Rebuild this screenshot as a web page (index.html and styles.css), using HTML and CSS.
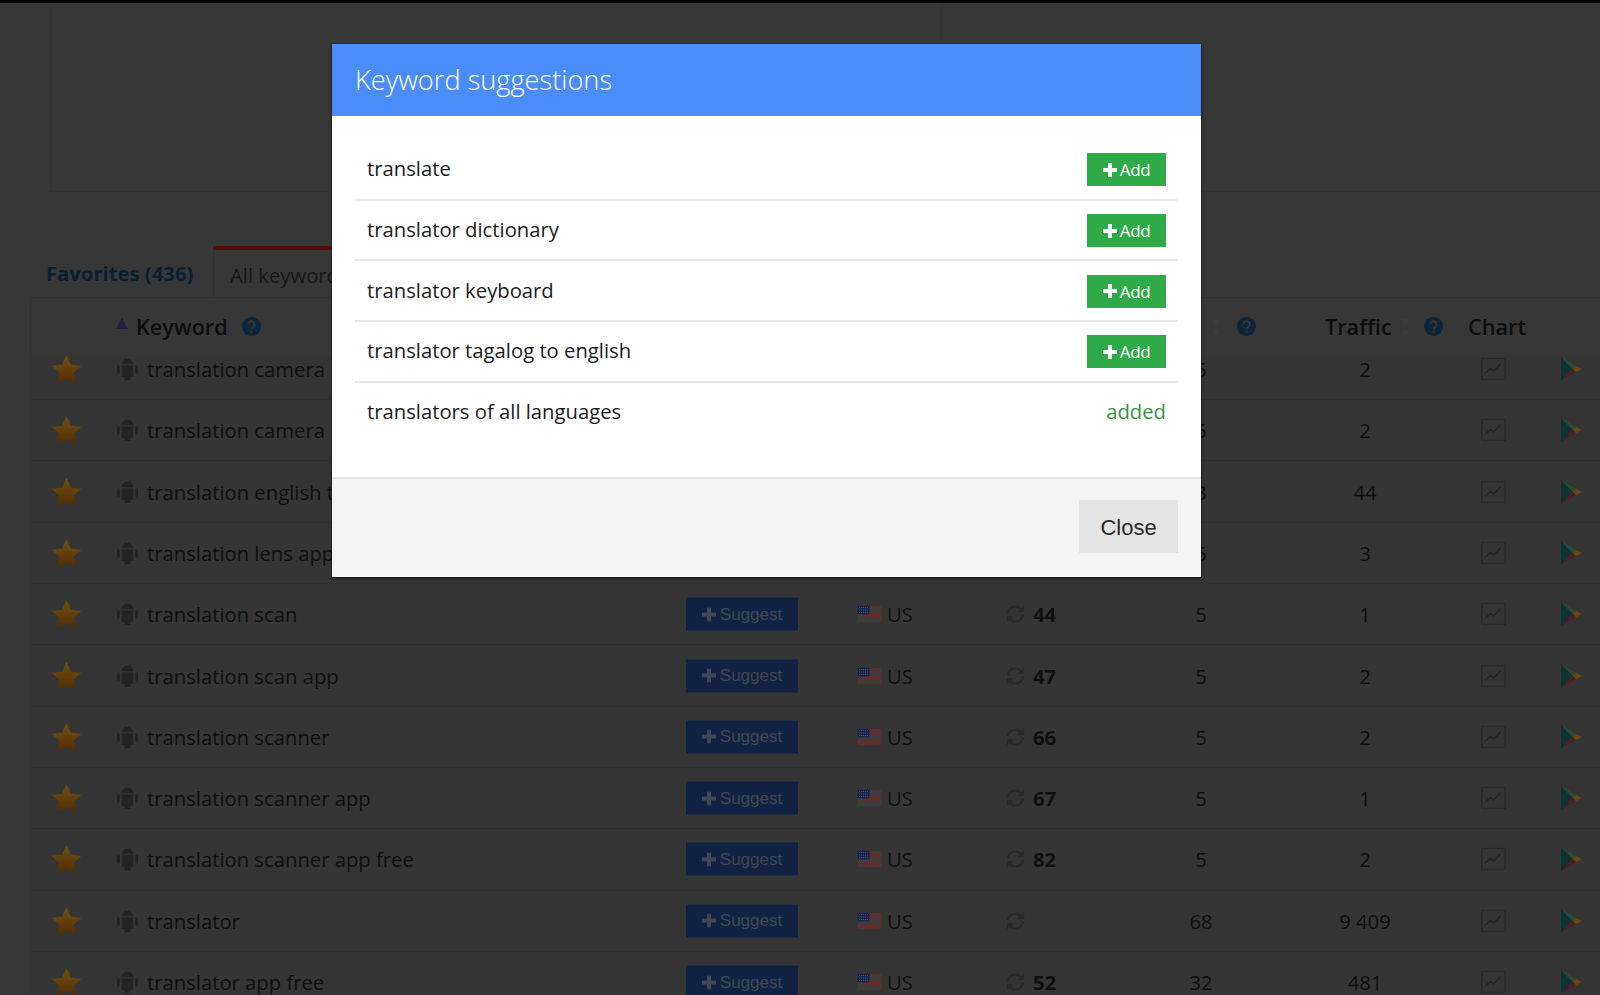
FILE: index.html
```html
<!DOCTYPE html>
<html lang="en">
<head>
<meta charset="utf-8">
<title>Keyword suggestions</title>
<link rel="stylesheet" href="styles.css">
</head>
<body>
<svg class="defs" width="0" height="0" aria-hidden="true">
  <defs>
    <linearGradient id="stargrad" x1="0" y1="0" x2="0" y2="1"><stop offset="0" stop-color="#6e5214"/><stop offset="1" stop-color="#552b00"/></linearGradient>
    <symbol id="star" viewBox="0 0 32 30"><path d="M16 .5l4.600 10 11 1.200-8.200 7.300 2.300 10.800L16 24.300 6.300 29.800 8.600 19 .4 11.700l11-1.200z" fill="url(#stargrad)"/></symbol>
    <symbol id="android" viewBox="0 0 22 24"><path fill="#242424" d="M5 8h12v11a1.500 1.500 0 0 1-1.500 1.500H14V23a1.500 1.500 0 0 1-3 0v-2.500h0V23a1.500 1.500 0 0 1-3 0v-2.500H6.500A1.500 1.500 0 0 1 5 19zM5 7c0-2.400 1.500-4.300 3.500-5.100L7.600.3l.6-.3 1 1.500C9.800 1.300 10.400 1.200 11 1.200s1.200.1 1.800.3l1-1.500.6.3-.9 1.600C15.500 2.700 17 4.600 17 7zM1.500 8A1.500 1.500 0 0 1 3 9.500v6a1.500 1.500 0 0 1-3 0v-6A1.500 1.500 0 0 1 1.500 8zM20.500 8A1.500 1.500 0 0 1 22 9.500v6a1.500 1.500 0 0 1-3 0v-6A1.500 1.500 0 0 1 20.500 8z"/></symbol>
    <symbol id="plus" viewBox="0 0 14 14"><path d="M5 0h4v5h5v4H9v5H5V9H0V5h5z" fill="currentColor"/></symbol>
    <symbol id="flag" viewBox="0 0 24 17">
      <rect width="24" height="17" fill="#3f3a3b"/>
      <path d="M0 1.500h24M0 4h24M0 6.500h24M0 9h24M0 11.500h24M0 14h24M0 16.500h24" stroke="#682c28" stroke-width="1.200"/>
      <rect width="12" height="9" fill="#1a2850"/>
      <path d="M1.500 2h9M1.500 4.500h9M1.500 7h9" stroke="#454f6c" stroke-width="1" stroke-dasharray="1 1"/>
    </symbol>
    <symbol id="refresh" viewBox="0 0 22 20"><g fill="none" stroke="#2a2a2a" stroke-width="2.200"><path d="M3 9a8 8 0 0 1 14-4"/><path d="M19 11a8 8 0 0 1-14 4"/></g><path d="M20 1v7h-7zM2 19v-7h7z" fill="#2a2a2a"/></symbol>
    <symbol id="chart" viewBox="0 0 24 22"><rect x=".75" y=".75" width="22.500" height="20.500" fill="none" stroke="#2b2b2b" stroke-width="1.500"/><path d="M4 15l5-4.500 3 2.500 7-7" fill="none" stroke="#242424" stroke-width="1.300"/></symbol>
    <symbol id="play" viewBox="0 0 21 24">
      <path d="M0 0l12 12L0 24z" fill="#0f3335"/>
      <path d="M0 0l15 9-3 3z" fill="#2c4a34"/>
      <path d="M0 24l15-9-3-3z" fill="#571b20"/>
      <path d="M15 9l6 3-6 3-3-3z" fill="#654810"/>
    </symbol>
    <symbol id="help" viewBox="0 0 18 18"><circle cx="9" cy="9" r="9" fill="#0d2639"/><path d="M6 7a3 3 0 1 1 4.600 2.500C9.500 10.200 9 10.700 9 11.500" fill="none" stroke="#353535" stroke-width="2"/><rect x="8" y="13" width="2" height="2" fill="#353535"/></symbol>
  </defs>
</svg>

<div class="topbar"></div>
<div class="panels">
  <div class="panel panel-left"></div>
  <div class="panel panel-right"></div>
</div>

<div class="tabs">
  <div class="tab tab-favorites">Favorites (436)</div>
  <div class="tab tab-all">All keywords</div>
</div>

<div class="table">
  <div class="thead">
    <div class="th-keyword"><span class="sort-up"></span><span>Keyword</span><svg class="help"><use href="#help"/></svg></div>
    <div class="th-rank"><span class="sort"></span><svg class="help"><use href="#help"/></svg></div>
    <div class="th-traffic"><span>Traffic</span><span class="sort"></span><svg class="help"><use href="#help"/></svg></div>
    <div class="th-chart">Chart</div>
  </div>

  <div class="row">
    <svg class="star"><use href="#star"/></svg><svg class="android"><use href="#android"/></svg>
    <span class="kw">translation camera</span>
    <span class="cell-score">5</span><span class="cell-traffic">2</span>
    <svg class="chart"><use href="#chart"/></svg><svg class="play"><use href="#play"/></svg>
  </div>
  <div class="row">
    <svg class="star"><use href="#star"/></svg><svg class="android"><use href="#android"/></svg>
    <span class="kw">translation camera</span>
    <span class="cell-score">5</span><span class="cell-traffic">2</span>
    <svg class="chart"><use href="#chart"/></svg><svg class="play"><use href="#play"/></svg>
  </div>
  <div class="row">
    <svg class="star"><use href="#star"/></svg><svg class="android"><use href="#android"/></svg>
    <span class="kw">translation english to</span>
    <span class="cell-score">3</span><span class="cell-traffic">44</span>
    <svg class="chart"><use href="#chart"/></svg><svg class="play"><use href="#play"/></svg>
  </div>
  <div class="row">
    <svg class="star"><use href="#star"/></svg><svg class="android"><use href="#android"/></svg>
    <span class="kw">translation lens app</span>
    <span class="cell-score">5</span><span class="cell-traffic">3</span>
    <svg class="chart"><use href="#chart"/></svg><svg class="play"><use href="#play"/></svg>
  </div>
  <div class="row">
    <svg class="star"><use href="#star"/></svg><svg class="android"><use href="#android"/></svg>
    <span class="kw">translation scan</span>
    <span class="suggest"><svg class="plus"><use href="#plus"/></svg>Suggest</span>
    <svg class="flag"><use href="#flag"/></svg><span class="cc">US</span>
    <svg class="refresh"><use href="#refresh"/></svg><b class="rank">44</b>
    <span class="cell-score">5</span><span class="cell-traffic">1</span>
    <svg class="chart"><use href="#chart"/></svg><svg class="play"><use href="#play"/></svg>
  </div>
  <div class="row">
    <svg class="star"><use href="#star"/></svg><svg class="android"><use href="#android"/></svg>
    <span class="kw">translation scan app</span>
    <span class="suggest"><svg class="plus"><use href="#plus"/></svg>Suggest</span>
    <svg class="flag"><use href="#flag"/></svg><span class="cc">US</span>
    <svg class="refresh"><use href="#refresh"/></svg><b class="rank">47</b>
    <span class="cell-score">5</span><span class="cell-traffic">2</span>
    <svg class="chart"><use href="#chart"/></svg><svg class="play"><use href="#play"/></svg>
  </div>
  <div class="row">
    <svg class="star"><use href="#star"/></svg><svg class="android"><use href="#android"/></svg>
    <span class="kw">translation scanner</span>
    <span class="suggest"><svg class="plus"><use href="#plus"/></svg>Suggest</span>
    <svg class="flag"><use href="#flag"/></svg><span class="cc">US</span>
    <svg class="refresh"><use href="#refresh"/></svg><b class="rank">66</b>
    <span class="cell-score">5</span><span class="cell-traffic">2</span>
    <svg class="chart"><use href="#chart"/></svg><svg class="play"><use href="#play"/></svg>
  </div>
  <div class="row">
    <svg class="star"><use href="#star"/></svg><svg class="android"><use href="#android"/></svg>
    <span class="kw">translation scanner app</span>
    <span class="suggest"><svg class="plus"><use href="#plus"/></svg>Suggest</span>
    <svg class="flag"><use href="#flag"/></svg><span class="cc">US</span>
    <svg class="refresh"><use href="#refresh"/></svg><b class="rank">67</b>
    <span class="cell-score">5</span><span class="cell-traffic">1</span>
    <svg class="chart"><use href="#chart"/></svg><svg class="play"><use href="#play"/></svg>
  </div>
  <div class="row">
    <svg class="star"><use href="#star"/></svg><svg class="android"><use href="#android"/></svg>
    <span class="kw">translation scanner app free</span>
    <span class="suggest"><svg class="plus"><use href="#plus"/></svg>Suggest</span>
    <svg class="flag"><use href="#flag"/></svg><span class="cc">US</span>
    <svg class="refresh"><use href="#refresh"/></svg><b class="rank">82</b>
    <span class="cell-score">5</span><span class="cell-traffic">2</span>
    <svg class="chart"><use href="#chart"/></svg><svg class="play"><use href="#play"/></svg>
  </div>
  <div class="row">
    <svg class="star"><use href="#star"/></svg><svg class="android"><use href="#android"/></svg>
    <span class="kw">translator</span>
    <span class="suggest"><svg class="plus"><use href="#plus"/></svg>Suggest</span>
    <svg class="flag"><use href="#flag"/></svg><span class="cc">US</span>
    <svg class="refresh"><use href="#refresh"/></svg>
    <span class="cell-score">68</span><span class="cell-traffic">9 409</span>
    <svg class="chart"><use href="#chart"/></svg><svg class="play"><use href="#play"/></svg>
  </div>
  <div class="row">
    <svg class="star"><use href="#star"/></svg><svg class="android"><use href="#android"/></svg>
    <span class="kw">translator app free</span>
    <span class="suggest"><svg class="plus"><use href="#plus"/></svg>Suggest</span>
    <svg class="flag"><use href="#flag"/></svg><span class="cc">US</span>
    <svg class="refresh"><use href="#refresh"/></svg><b class="rank">52</b>
    <span class="cell-score">32</span><span class="cell-traffic">481</span>
    <svg class="chart"><use href="#chart"/></svg><svg class="play"><use href="#play"/></svg>
  </div>
</div>

<div class="modal">
  <div class="modal-head">Keyword suggestions</div>
  <div class="modal-body">
    <div class="sug"><span class="sug-text">translate</span><span class="add"><svg class="add-plus"><use href="#plus"/></svg>Add</span></div>
    <div class="sug"><span class="sug-text">translator dictionary</span><span class="add"><svg class="add-plus"><use href="#plus"/></svg>Add</span></div>
    <div class="sug"><span class="sug-text">translator keyboard</span><span class="add"><svg class="add-plus"><use href="#plus"/></svg>Add</span></div>
    <div class="sug"><span class="sug-text">translator tagalog to english</span><span class="add"><svg class="add-plus"><use href="#plus"/></svg>Add</span></div>
    <div class="sug sug-last"><span class="sug-text">translators of all languages</span><span class="added sug-text">added</span></div>
  </div>
  <div class="modal-foot"><span class="close">Close</span></div>
</div>
</body>
</html>
```
FILE: styles.css
```css
* { box-sizing: border-box; }
html, body { margin: 0; height: 995px; overflow: hidden; }
body {
  position: relative;
  background: #373737;
  color: #101010;
  font-family: "Open Sans", sans-serif;
  font-size: 20.25px;
}
.defs { position: absolute; }

.topbar { height: 3px; background: #000; }

.panels { display: flex; height: 189px; padding-left: 50px; }
.panel { border-bottom: 1px solid #333; }
.panel-left { width: 892px; border-left: 1px solid #333; border-right: 1px solid #333; }
.panel-right { flex: 1; }

.tabs { display: flex; height: 51px; margin-top: 54px; padding-left: 30px; }
.tab { display: flex; align-items: center; padding-top: 2px; }
.tab-favorites { width: 183px; padding-left: 16px; font-weight: 700; color: #0b2033; }
.tab-all {
  width: 300px;
  padding-left: 16px;
  color: #181818;
  border-top: 4px solid #560d0d;
  border-left: 1px solid #303030;
}

.table { margin-left: 30px; border-left: 1px solid #323232; background: #353535; }

.thead {
  position: relative;
  z-index: 1;
  height: 58px;
  border-top: 1px solid #323232;
  background: #373737;
  font-size: 21.7px;
  font-weight: 600;
  color: #0e0e0e;
}
.thead > div { position: absolute; top: 0; height: 57px; display: flex; align-items: center; }
.th-keyword { left: 85px; }
.th-rank { left: 1172px; }
.th-traffic { left: 1294px; }
.th-chart { left: 1437px; }
.help { width: 19px; height: 19px; margin-left: 14px; }
.sort-up {
  width: 0; height: 0;
  margin-right: 8px;
  margin-top: -6px;
  border: 6px solid transparent;
  border-top: 0;
  border-bottom: 11px solid #1c2240;
}
.sort {
  width: 0; height: 0;
  margin-left: 8px;
  border: 5px solid transparent;
  border-top: 8px solid #3a3a3a;
  border-bottom: 8px solid #3a3a3a;
}
.th-rank .help { margin-left: 16px; }

.row {
  position: relative;
  height: 61.33px;
  border-bottom: 1px solid #303030;
}
.thead + .row { margin-top: -16.3px; }
.row > * { position: absolute; top: 50%; transform: translateY(-50%); }

.star { left: 20px; width: 31px; height: 29px; }
.android { left: 86px; width: 21px; height: 23px; }
.kw { left: 116px; white-space: nowrap; }
.suggest {
  left: 655px;
  width: 112px;
  height: 33px;
  display: flex;
  align-items: center;
  justify-content: center;
  background: #122244;
  color: #40464f;
  font-family: "Liberation Sans", sans-serif;
  font-size: 17px;
}
.plus { width: 14px; height: 14px; margin-right: 4px; }
.flag { left: 826px; width: 25px; height: 17px; }
.cc { left: 856px; }
.refresh { left: 974px; width: 21px; height: 20px; }
.rank { left: 1002px; font-weight: 700; }
.cell-score { left: 1120px; width: 100px; text-align: center; }
.cell-traffic { left: 1284px; width: 100px; text-align: center; }
.chart { left: 1450px; width: 25px; height: 23px; }
.play { left: 1530px; width: 21px; height: 24px; }

.modal {
  position: absolute;
  z-index: 2;
  left: 332px;
  top: 44px;
  width: 869px;
  height: 533px;
  background: #fff;
  color: #1b1b1b;
  display: flex;
  flex-direction: column;
  box-shadow: 0 1px 3px rgba(0, 0, 0, .7);
}
.modal-head {
  height: 71.5px;
  display: flex;
  align-items: center;
  padding-left: 23px;
  background: #4a8cf8;
  color: #fff;
  font-size: 27.2px;
  font-weight: 300;
}
.modal-body { height: 363.5px; padding: 24.500px 23px 0; border-bottom: 2px solid #e6e6e6; }
.sug {
  height: 60.7px;
  padding: 0 12px;
  display: flex;
  align-items: center;
  justify-content: space-between;
  border-bottom: 2px solid #e6e6e6;
}
.sug-last { border-bottom: 0; }
.sug-text { margin-bottom: 2px; }
.sug-last .sug-text { margin-bottom: 4px; }
.add {
  width: 79px;
  height: 33px;
  margin-top: 1px;
  display: flex;
  align-items: center;
  justify-content: center;
  background: #2faa48;
  color: #fff;
  font-size: 17px;
  letter-spacing: -.4px;
}
.add-plus { width: 14px; height: 14px; margin-right: 3px; }
.added { color: #3b9244; }
.modal-foot {
  flex: 1;
  display: flex;
  align-items: center;
  justify-content: flex-end;
  padding-right: 23px;
  background: #f3f3f3;
}
.close {
  width: 99px;
  height: 53px;
  margin-bottom: 3px;
  padding-top: 2px;
  display: flex;
  align-items: center;
  justify-content: center;
  background: #e4e4e4;
  color: #2a2a2a;
  font-family: "Liberation Sans", sans-serif;
  font-size: 22px;
}
```
